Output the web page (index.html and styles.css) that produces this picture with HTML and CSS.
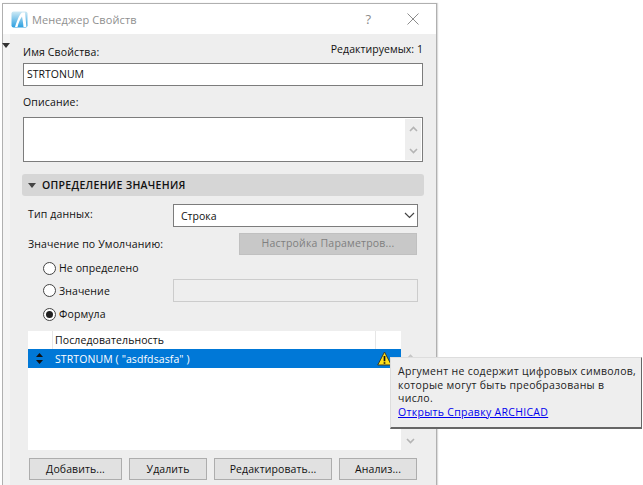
FILE: index.html
```html
<!DOCTYPE html>
<html lang="ru">
<head>
<meta charset="utf-8">
<title>Менеджер Свойств</title>
<link rel="stylesheet" href="styles.css">
</head>
<body>
<div class="window">
  <header class="titlebar">
    <svg class="logo" width="17" height="17" viewBox="0 0 17 17">
      <defs><linearGradient id="lg" x1="0" y1="0" x2="0" y2="1"><stop offset="0" stop-color="#cfeaf5"/><stop offset="1" stop-color="#2a9fe0"/></linearGradient></defs>
      <rect x="0.5" y="0.5" width="16" height="16" rx="2" fill="url(#lg)"/>
      <path d="M4 16 C6 10 8 4 11 1.500 L14 1.500 C14.500 7 15 12 15.500 16 L12.500 16 C12 11 11.500 8 11 5.500 C9 8 7.500 12 6.500 16 Z" fill="#fff"/>
    </svg>
    <span class="title">Менеджер Свойств</span>
    <span class="help">?</span>
    <svg class="close" width="12" height="12" viewBox="0 0 12 12"><path d="M0.500 0.500 L11.500 11.500 M11.500 0.500 L0.500 11.500" stroke="#8c8c8c" fill="none"/></svg>
  </header>
  <div class="body">
    <aside class="strip"><span class="strip-arrow"></span></aside>
    <main class="content">
      <div class="top-row">
        <label class="label">Имя Свойства:</label>
        <span class="editable">Редактируемых: 1</span>
      </div>
      <div class="field name-field">STRTONUM</div>
      <label class="label desc-label">Описание:</label>
      <div class="field textarea">
        <div class="vscroll">
          <svg width="9" height="6" viewBox="0 0 9 6"><path d="M1 5 L4.500 1.500 L8 5" stroke="#b4b4b4" stroke-width="1.600" fill="none"/></svg>
          <svg width="9" height="6" viewBox="0 0 9 6"><path d="M1 1 L4.500 4.500 L8 1" stroke="#b4b4b4" stroke-width="1.600" fill="none"/></svg>
        </div>
      </div>
      <div class="section"><span class="section-arrow"></span>ОПРЕДЕЛЕНИЕ ЗНАЧЕНИЯ</div>
      <div class="def">
        <div class="row type-row">
          <span class="row-label">Тип данных:</span>
          <div class="select">Строка
            <svg width="11" height="7" viewBox="0 0 11 7"><path d="M1 1 L5.500 5.500 L10 1" stroke="#444" stroke-width="1.200" fill="none"/></svg>
          </div>
        </div>
        <div class="row default-row">
          <span class="row-label">Значение по Умолчанию:</span>
          <div class="btn-disabled">Настройка Параметров...</div>
        </div>
        <div class="radios">
          <div class="radio-row radio-first"><span class="radio"></span>Не определено</div>
          <div class="radio-row radio-value"><span class="radio"></span>Значение<div class="input-disabled"></div></div>
          <div class="radio-row radio-third"><span class="radio radio-on"></span>Формула</div>
        </div>
      </div>
      <div class="list-wrap">
        <div class="list">
          <div class="list-head">
            <span class="col-a"></span>
            <span class="col-b">Последовательность</span>
            <span class="col-c"></span>
          </div>
          <div class="list-row">
            <span class="col-a sort"><svg width="7" height="11" viewBox="0 0 7 11"><path d="M3.500 0 L7 4 L0 4 Z M3.500 11 L7 7 L0 7 Z" fill="#111"/></svg></span>
            <span class="col-b">STRTONUM ( "asdfdsasfa" )</span>
            <span class="col-c warn"><svg width="15" height="15" viewBox="0 0 15 15"><path d="M7.500 1 L14.300 14 L0.700 14 Z" fill="#ffe01a" stroke="#3c3c28" stroke-linejoin="round"/><path d="M7.500 5 V10.200 M7.500 11.300 V12.800" stroke="#111" stroke-width="1.700" fill="none"/></svg></span>
          </div>
        </div>
        <div class="list-scroll">
          <svg width="9" height="6" viewBox="0 0 9 6"><path d="M1 5 L4.500 1.500 L8 5" stroke="#c4c4c4" stroke-width="1.600" fill="none"/></svg>
          <svg width="9" height="6" viewBox="0 0 9 6"><path d="M1 1 L4.500 4.500 L8 1" stroke="#b4b4b4" stroke-width="1.600" fill="none"/></svg>
        </div>
      </div>
      <div class="buttons">
        <button class="btn btn-add">Добавить...</button>
        <button class="btn btn-del">Удалить</button>
        <button class="btn btn-edit">Редактировать...</button>
        <button class="btn btn-an">Анализ...</button>
      </div>
    </main>
  </div>
</div>
<div class="tooltip">Аргумент не содержит цифровых символов,<br>которые могут быть преобразованы в<br>число.<br><a href="#">Открыть Справку ARCHICAD</a></div>
</body>
</html>
```
FILE: styles.css
```css
* { box-sizing: border-box; }
html, body { margin: 0; padding: 0; background: #fff; }
body {
  width: 643px;
  height: 485px;
  overflow: hidden;
  position: relative;
  font-family: "Open Sans", "Noto Sans", sans-serif;
  font-size: 10.5px;
  color: #111;
}
.window {
  margin: 3px 0 0 2px;
  width: 435px;
  height: 482px;
  border: 1px solid #b0b0b0;
  border-bottom: none;
  box-shadow: 1px 0 1px #ddd;
  display: flex;
  flex-direction: column;
}
.titlebar {
  height: 30px;
  flex: none;
  display: flex;
  align-items: center;
  background: #fff;
  padding-left: 8px;
}
.logo { flex: none; }
.title { margin-left: 4px; font-size: 11px; color: #8f8f8f; flex: 1; letter-spacing: 0.1px; }
.help { color: #8c8c8c; font-size: 13px; margin-right: 36px; }
.close { margin-right: 17px; }
.body { flex: 1; display: flex; background: #eee; min-height: 0; }
.strip { width: 7px; flex: none; background: #f4f4f4; position: relative; }
.strip-arrow {
  position: absolute; left: -1px; top: 9px;
  border-left: 4px solid transparent; border-right: 4px solid transparent;
  border-top: 5px solid #333;
}
.content { flex: 1; padding: 7px 13px 0 13px; min-width: 0; }
.top-row { display: flex; justify-content: space-between; height: 22px; }
.label { display: block; font-size: 10.5px; line-height: 14px; letter-spacing: 0.15px; }
.top-row .label { margin-top: 4px; }
.editable { line-height: 14px; margin-top: 1px; letter-spacing: 0.05px; }
.field { background: #fff; border: 1px solid #7c7c7c; }
.name-field { height: 23px; line-height: 21px; padding-left: 3px; font-size: 10.5px; }
.desc-label { margin-top: 9px; }
.textarea { height: 45px; margin-top: 8px; display: flex; justify-content: flex-end; padding: 1px; }
.vscroll {
  width: 16px; background: #eee; display: flex; flex-direction: column;
  align-items: center; justify-content: space-between; padding: 7px 0 6px;
}
.section {
  margin: 12px -1px 0 -1px;
  height: 22px;
  background: #d6d6d6;
  border-radius: 3px;
  display: flex;
  align-items: center;
  font-size: 10.5px;
  font-weight: 600;
  letter-spacing: 0.3px;
  padding-left: 6px;
}
.section-arrow {
  width: 0; height: 0; margin-right: 6px;
  border-left: 4px solid transparent; border-right: 4px solid transparent;
  border-top: 5px solid #444;
}
.def { padding-left: 5px; padding-right: 5px; }
.row { display: flex; justify-content: space-between; }
.row-label { font-size: 10.5px; line-height: 14px; letter-spacing: 0.15px; }
.type-row { margin-top: 8px; height: 23px; align-items: flex-start; }
.type-row .row-label { margin-top: 3px; }
.select {
  width: 245px; height: 23px; background: #fff; border: 1px solid #7c7c7c;
  display: flex; align-items: center; justify-content: space-between;
  padding: 0 2px 0 7px;
}
.default-row { margin-top: 6px; height: 22px; align-items: center; }
.btn-disabled {
  width: 178px; height: 22px; margin-right: 1px; background: #c8c8c8; border: 1px solid #c0c0c0;
  color: #7f7f7f; text-align: center; line-height: 19px; letter-spacing: 0.2px;
}
.radios { padding-left: 15px; }
.radio-row { display: flex; align-items: center; letter-spacing: 0.1px; }
.radio-first { margin-top: 4px; height: 18px; }
.radio-value { margin-top: 2px; height: 23px; }
.radio-third { margin-top: 3px; height: 18px; }
.radio {
  width: 13px; height: 13px; border: 1px solid #444; border-radius: 50%; background: #fff;
  margin-right: 3px; flex: none; position: relative;
}
.radio-on::after {
  content: ""; position: absolute; left: 2px; top: 2px; width: 7px; height: 7px;
  border-radius: 50%; background: #222;
}
.input-disabled {
  width: 245px; height: 23px; margin-left: auto; background: #eee; border: 1px solid #ccc;
  margin-right: 0;
}
.list-wrap { display: flex; margin-top: 8px; padding-left: 5px; height: 119px; }
.list { width: 373px; background: #fff; }
.list-head { display: flex; height: 18px; align-items: center; line-height: 14px; background: #fff; }
.list-head .col-a { border-right: 1px solid #e6e6e6; height: 18px; }
.list-head .col-c { border-left: 1px solid #e6e6e6; height: 18px; }
.col-a { width: 25px; flex: none; }
.col-b { flex: 1; padding-left: 2px; letter-spacing: 0.1px; }
.col-c { width: 26px; flex: none; }
.list-row { display: flex; height: 19px; background: #0078d7; color: #fff; align-items: center; }
.list-row .col-b { padding-left: 2px; }
.sort { display: flex; justify-content: center; padding-right: 2px; }
.warn { display: flex; align-items: center; padding-left: 2px; }
.list-scroll {
  width: 16px; display: flex; flex-direction: column; align-items: center;
  justify-content: space-between; padding: 23px 0 6px;
  margin-left: 1px;
}
.buttons { display: flex; margin-top: 8px; padding-left: 6px; gap: 7px; }
.btn {
  height: 22px; background: #e1e1e1; border: 1px solid #adadad; padding: 0;
  font: inherit; color: #111; letter-spacing: 0.1px;
}
.btn-add { width: 93px; }
.btn-del { width: 78px; }
.btn-edit { width: 118px; }
.btn-an { width: 78px; }
.tooltip {
  position: absolute; left: 390px; top: 357px; width: 252px; height: 72px;
  background: #eee; border: 1px solid #ddd; border-right-color: #666; border-bottom: 2px solid #666;
  padding: 7px 4px 0 7px; line-height: 13.5px; font-size: 10.5px; letter-spacing: 0.3px; color: #222; white-space: nowrap;
}
.tooltip a { color: #0000ee; }
```
